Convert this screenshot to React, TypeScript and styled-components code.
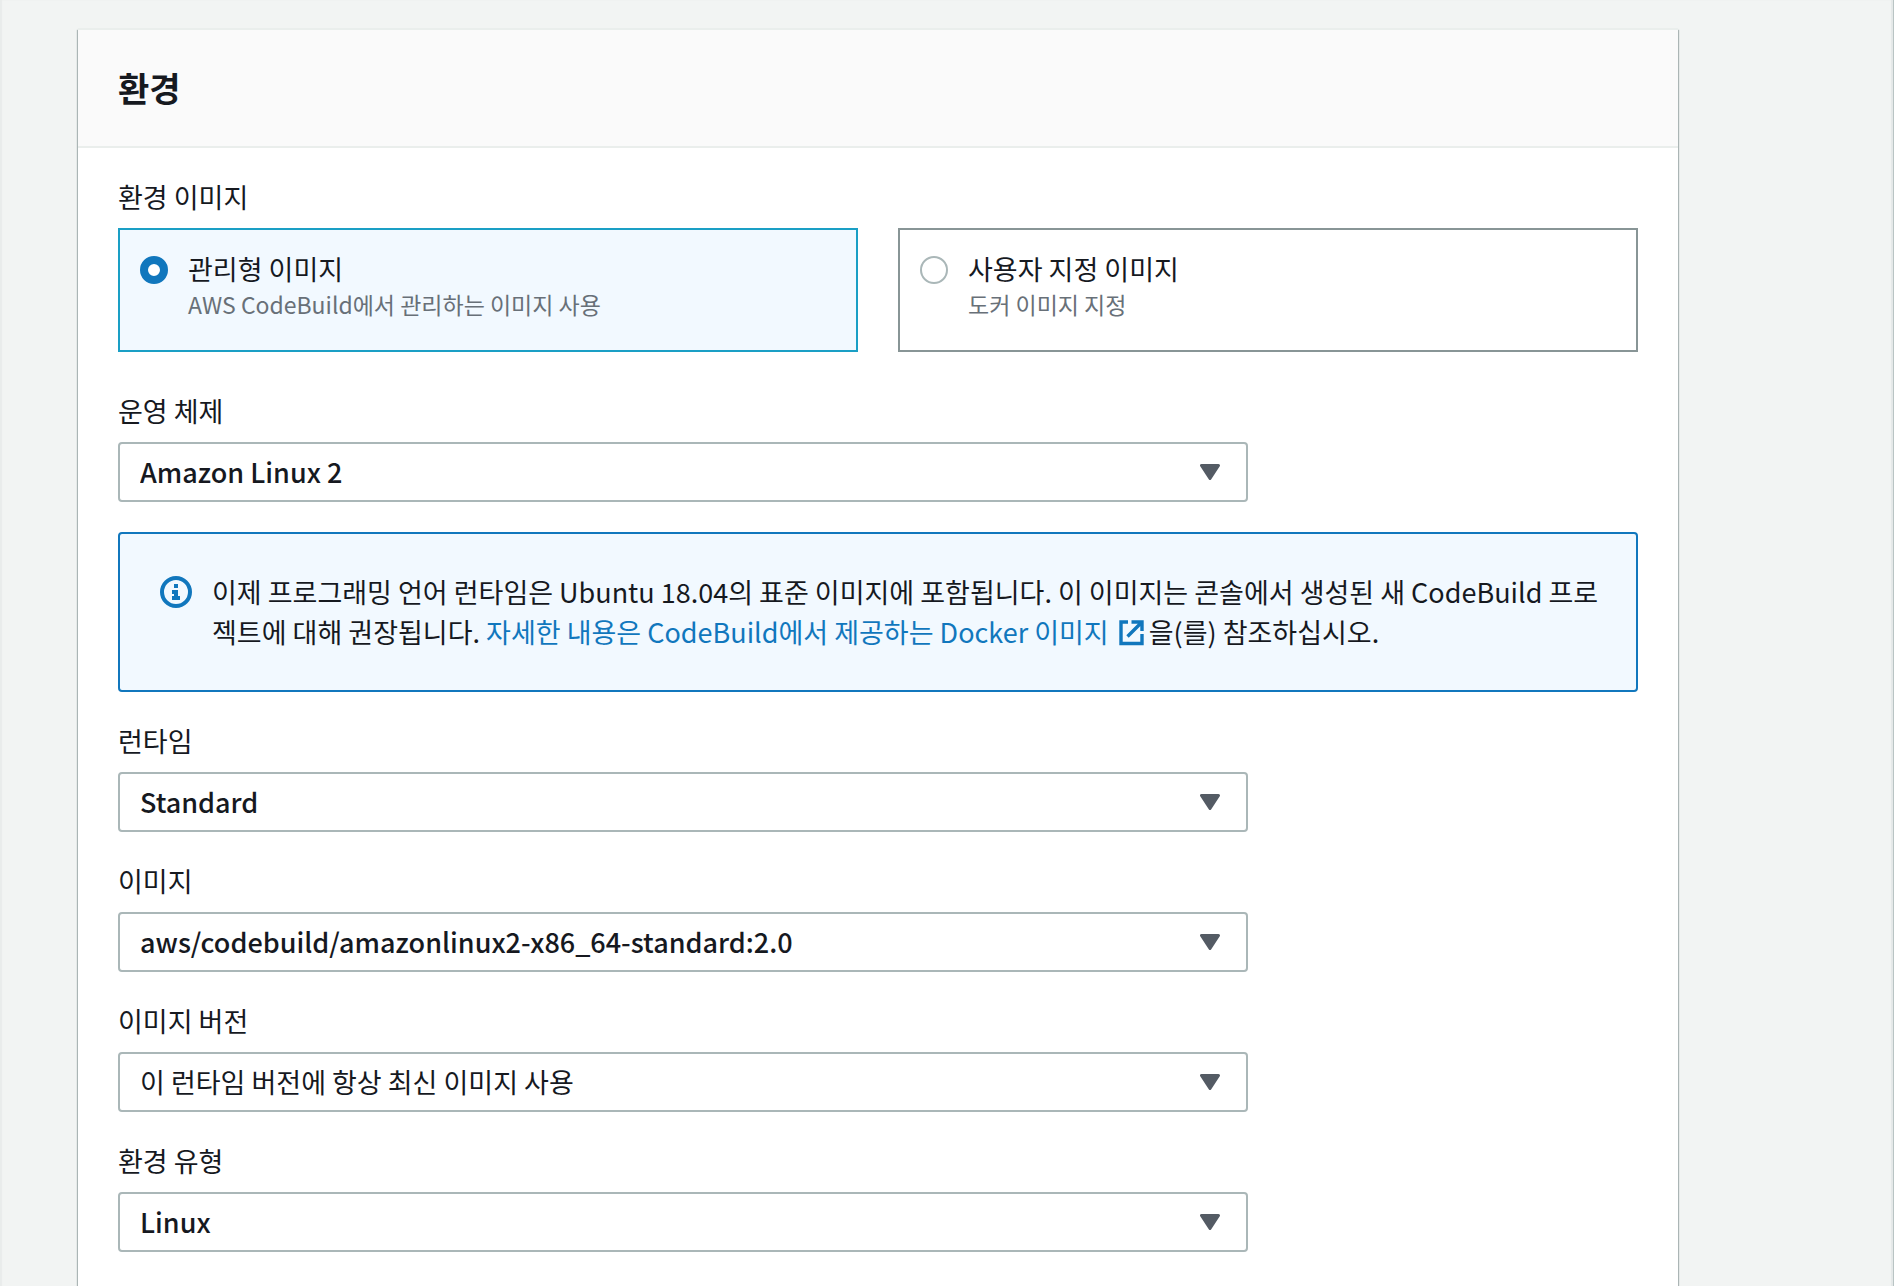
import React, { useState } from "react";
import styled, { createGlobalStyle } from "styled-components";

const GlobalStyle = createGlobalStyle`
  *, *::before, *::after { box-sizing: border-box; }
  body {
    margin: 0;
    background: #f2f4f3;
    color: #16191f;
    font-family: "Noto Sans CJK KR", "Noto Sans", sans-serif;
    font-size: 27px;
    line-height: 40px;
  }
`;

const Page = styled.main`
  min-height: 100vh;
  padding: 28px 215px 0 78px;
  border-right: 1px solid #b9c4c4;
  box-shadow: inset 2px 0 1px #e9eceb, inset -2px 0 1px #e4e8e8;
`;

const Panel = styled.section`
  min-height: calc(100vh - 28px);
  background: #fff;
  border-top: 2px solid #eaeeec;
  box-shadow: 0 2px 2px #00000026, 1px 2px 1px #b4bebe, -1px 2px 1px #b4bebe;
`;

const PanelHeader = styled.header`
  padding: 38px 40px;
  background: #fafafa;
  border-bottom: 2px solid #eaeeec;
`;

const Heading = styled.h2`
  margin: 0;
  font-size: 34px;
  line-height: 40px;
  font-weight: 700;
`;

const Form = styled.form`
  padding: 29px 40px 34px;
`;

const Tiles = styled.fieldset`
  display: grid;
  grid-template-columns: 1fr 1fr;
  column-gap: 40px;
  margin: 0 0 39px;
  padding: 0;
  border: 0;
`;

const Legend = styled.legend`
  padding: 0;
  margin-bottom: 11px;
`;

const Tile = styled.label<{ $selected: boolean }>`
  display: flex;
  align-items: flex-start;
  gap: 20px;
  min-height: 124px;
  padding: 19px 20px;
  border: 2px solid ${(p) => (p.$selected ? "#1a9fc5" : "#889596")};
  background: ${(p) => (p.$selected ? "#f2f9ff" : "#fff")};
  cursor: pointer;
`;

const Radio = styled.input`
  appearance: none;
  flex: none;
  width: 28px;
  height: 28px;
  margin: 7px 0 0;
  border: 2px solid #aab7b8;
  border-radius: 50%;
  background: #fff;
  &:checked { border: 8px solid #1177bd; }
`;

const TileText = styled.span`
  display: flex;
  flex-direction: column;
`;

const TileNote = styled.span`
  color: #687078;
  font-size: 23px;
  line-height: 30px;
`;

const Field = styled.div`
  max-width: 1130px;
  margin-bottom: 29px;
`;

const FieldLabel = styled.label`
  display: block;
  margin-bottom: 11px;
`;

const SelectBox = styled.div`
  display: grid;
  align-items: center;
  & > * { grid-area: 1 / 1; }
  & > svg {
    justify-self: end;
    margin-right: 28px;
    pointer-events: none;
  }
`;

const Select = styled.select<{ $latin?: boolean }>`
  appearance: none;
  width: 100%;
  height: 60px;
  padding: 0 60px 0 20px;
  border: 2px solid #aab7b8;
  border-radius: 4px;
  background: #fff;
  color: inherit;
  font: inherit;
  font-weight: ${(p) => (p.$latin ? 500 : 400)};
`;

const Alert = styled.div`
  display: flex;
  align-items: flex-start;
  gap: 20px;
  min-height: 160px;
  margin: 30px 0 29px;
  padding: 38px 36px 38px 40px;
  border: 2px solid #1177bd;
  border-radius: 4px;
  background: #f2f9ff;
  & > svg { flex: none; margin-top: 4px; }
`;

const AlertText = styled.p`
  margin: 0;
  flex: 1;
`;

const DocLink = styled.a`
  color: #1177bd;
  text-decoration: none;
  & > svg { margin: 0 5px 0 10px; vertical-align: -3px; }
`;

const CaretIcon = () => (
  <svg width="20" height="16" viewBox="0 0 20 16" aria-hidden="true">
    <path d="M1.5 1.5h17L10 14.5z" fill="#545b64" stroke="#545b64" strokeWidth="3" strokeLinejoin="round" />
  </svg>
);

const InfoIcon = () => (
  <svg width="32" height="32" viewBox="0 0 32 32" fill="none" aria-hidden="true">
    <circle cx="16" cy="16" r="14" stroke="#1177bd" strokeWidth="4" />
    <path d="M14 8h4v4h-4zM12 14h6v6h2v4h-8v-4h2v-2h-2z" fill="#1177bd" />
  </svg>
);

const ExternalIcon = () => (
  <svg width="25" height="26" viewBox="0 0 25 26" fill="none" stroke="#1177bd" strokeWidth="3.4" aria-hidden="true">
    <path d="M9 2H2v21.5h21V14M12.5 2H23v9M22.5 2.5 8.5 16.5" />
  </svg>
);

type SelectFieldProps = { id: string; label: string; value: string; latin?: boolean };

const SelectField = ({ id, label, value, latin }: SelectFieldProps) => (
  <Field>
    <FieldLabel htmlFor={id}>{label}</FieldLabel>
    <SelectBox>
      <Select id={id} defaultValue={value} $latin={latin}>
        <option>{value}</option>
      </Select>
      <CaretIcon />
    </SelectBox>
  </Field>
);

const imageKinds = [
  { id: "managed", title: "관리형 이미지", note: "AWS CodeBuild에서 관리하는 이미지 사용" },
  { id: "custom", title: "사용자 지정 이미지", note: "도커 이미지 지정" },
];

const runtimeFields: SelectFieldProps[] = [
  { id: "runtime", label: "런타임", value: "Standard", latin: true },
  { id: "image", label: "이미지", value: "aws/codebuild/amazonlinux2-x86_64-standard:2.0", latin: true },
  { id: "version", label: "이미지 버전", value: "이 런타임 버전에 항상 최신 이미지 사용" },
  { id: "env-type", label: "환경 유형", value: "Linux", latin: true },
];

export default function App() {
  const [kind, setKind] = useState("managed");
  return (
    <>
      <GlobalStyle />
      <Page>
        <Panel>
          <PanelHeader>
            <Heading>환경</Heading>
          </PanelHeader>
          <Form>
            <Tiles>
              <Legend>환경 이미지</Legend>
              {imageKinds.map((k) => (
                <Tile key={k.id} $selected={kind === k.id}>
                  <Radio type="radio" name="image-kind" checked={kind === k.id} onChange={() => setKind(k.id)} />
                  <TileText>
                    <span>{k.title}</span>
                    <TileNote>{k.note}</TileNote>
                  </TileText>
                </Tile>
              ))}
            </Tiles>
            <SelectField id="os" label="운영 체제" value="Amazon Linux 2" latin />
            <Alert>
              <InfoIcon />
              <AlertText>
                이제 프로그래밍 언어 런타임은 Ubuntu 18.04의 표준 이미지에 포함됩니다. 이 이미지는 콘솔에서 생성된 새 CodeBuild
                프로젝트에 대해 권장됩니다.{" "}
                <DocLink href="#docker-images">
                  자세한 내용은 CodeBuild에서 제공하는 Docker 이미지
                  <ExternalIcon />
                </DocLink>
                을(를) 참조하십시오.
              </AlertText>
            </Alert>
            {runtimeFields.map((f) => (
              <SelectField key={f.id} {...f} />
            ))}
          </Form>
        </Panel>
      </Page>
    </>
  );
}
